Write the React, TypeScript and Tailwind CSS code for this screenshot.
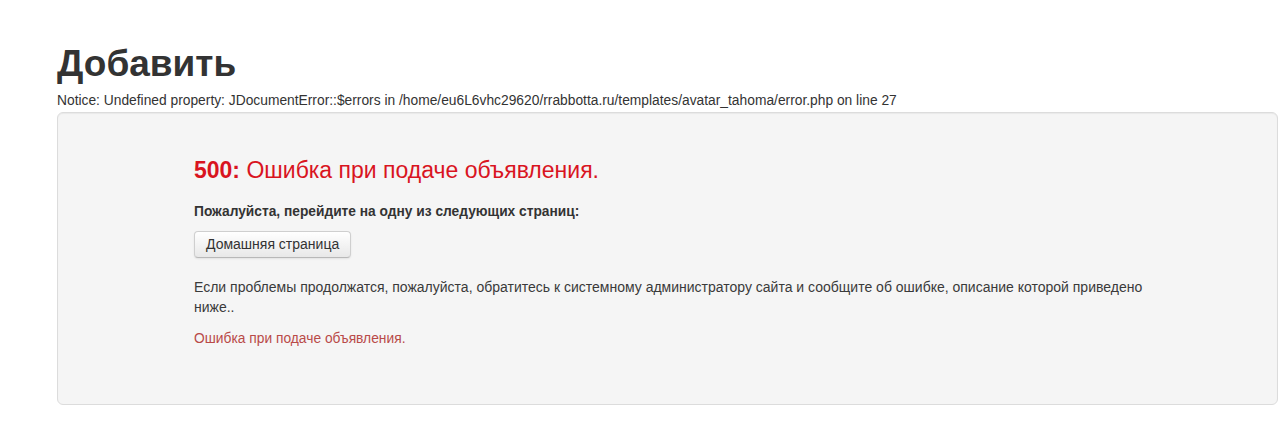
export default function App() {
  return (
    <div className="min-h-[437px] bg-white pl-[57px] pt-[44px] font-['Liberation_Sans',Arial,sans-serif] text-[#333]">
      <h1 className="text-[37px] font-bold leading-[40px] text-[#333]">Добавить</h1>
      <div className="mt-[9px] text-[13.8px] leading-[16px] text-[#333]">
        Notice: Undefined property: JDocumentError::$errors in
        /home/eu6L6vhc29620/rrabbotta.ru/templates/avatar_tahoma/error.php on line 27
      </div>

      <div className="mt-[3px] h-[293px] w-[1221px] rounded-[6px] border border-[#dcdcdc] bg-[#f5f5f5] pl-[136px] pt-[45px] shadow-[inset_0_1px_1px_rgba(0,0,0,0.05)]">
        <div className="w-[965px]">
          <h2 className="text-[23px] leading-[24px] text-[#d9141f]">
            <span className="font-bold">500:</span> Ошибка при подаче объявления.
          </h2>

          <p className="mt-[22px] text-[13.75px] font-bold leading-[16px] text-[#333]">
            Пожалуйста, перейдите на одну из следующих страниц:
          </p>

          <div className="mt-[11px]">
            <a
              href="#"
              className="inline-flex h-[27px] items-center rounded-[4px] border border-[#cfcfcf] border-b-[#b8b8b8] bg-[linear-gradient(180deg,#ffffff,#e8e8e8)] px-[11px] text-[14px] text-[#333] shadow-[0_1px_2px_rgba(0,0,0,0.08)]"
            >
              Домашняя страница
            </a>
          </div>

          <p className="mt-[19px] text-[14px] leading-[20px] text-[#3a3a3a]">
            Если проблемы продолжатся, пожалуйста, обратитесь к системному администратору сайта и сообщите об
            ошибке, описание которой приведено ниже..
          </p>

          <p className="mt-[12px] text-[13.8px] leading-[20px] text-[#b94a48]">Ошибка при подаче объявления.</p>
        </div>
      </div>
    </div>
  );
}
